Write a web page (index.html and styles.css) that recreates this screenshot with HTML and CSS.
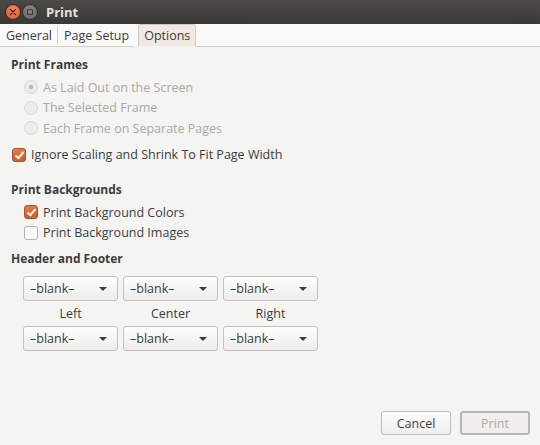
FILE: index.html
```html
<!DOCTYPE html>
<html lang="en">
<head>
    <meta charset="UTF-8">
    <title>Print</title>
    <link rel="stylesheet" href="styles.css">
</head>
<body>
    <div class="window">
        <header class="titlebar">
            <span class="wbtn close">
                <svg width="8" height="8" viewBox="0 0 8 8"><path d="M1.5 1.5l5 5M6.5 1.5l-5 5" stroke="#5a1a0a" stroke-width="1.4" stroke-linecap="round"/></svg>
            </span>
            <span class="wbtn minimize">
                <svg width="8" height="8" viewBox="0 0 8 8"><rect x="1.5" y="1.5" width="5" height="5" rx="1" fill="none" stroke="#3a3a38" stroke-width="1.2"/></svg>
            </span>
            <span class="title">Print</span>
        </header>

        <nav class="tabs">
            <span class="tab">General</span>
            <span class="tab-sep"></span>
            <span class="tab">Page Setup</span>
            <span class="tab active">Options</span>
            <span class="tab-rest"></span>
        </nav>

        <main class="panel">
            <h2 class="heading">Print Frames</h2>
            <div class="options">
                <label class="option disabled"><span class="radio checked"></span>As Laid Out on the Screen</label>
                <label class="option disabled"><span class="radio"></span>The Selected Frame</label>
                <label class="option disabled"><span class="radio"></span>Each Frame on Separate Pages</label>
            </div>
            <label class="option standalone"><span class="check checked"></span>Ignore Scaling and Shrink To Fit Page Width</label>

            <h2 class="heading">Print Backgrounds</h2>
            <div class="options">
                <label class="option"><span class="check checked"></span>Print Background Colors</label>
                <label class="option"><span class="check"></span>Print Background Images</label>
            </div>

            <h2 class="heading">Header and Footer</h2>
            <div class="hf-grid">
                <div class="combo">–blank–<span class="arrow"></span></div>
                <div class="combo">–blank–<span class="arrow"></span></div>
                <div class="combo">–blank–<span class="arrow"></span></div>
                <div class="hf-label">Left</div>
                <div class="hf-label">Center</div>
                <div class="hf-label">Right</div>
                <div class="combo">–blank–<span class="arrow"></span></div>
                <div class="combo">–blank–<span class="arrow"></span></div>
                <div class="combo">–blank–<span class="arrow"></span></div>
            </div>
        </main>

        <footer class="actions">
            <button class="btn" type="button">Cancel</button>
            <button class="btn default" type="button" disabled>Print</button>
        </footer>
    </div>
</body>
</html>
```

FILE: styles.css
```css
/* Print dialog */
body {
    margin: 0;
    font-family: "Open Sans", "DejaVu Sans", sans-serif;
    font-size: 12.5px;
    color: #3c3c3c;
    background: #f2f1f0;
}

.window {
    width: 540px;
    height: 445px;
    display: flex;
    flex-direction: column;
    background: #f4f4f3;
    overflow: hidden;
}

/* Title bar */
.titlebar {
    height: 24px;
    flex: none;
    display: flex;
    align-items: center;
    padding-left: 6px;
    background: linear-gradient(to bottom, #4b4a46, #3a3935);
    color: #dfdbd2;
}

.wbtn {
    width: 14px;
    height: 14px;
    border-radius: 50%;
    display: flex;
    align-items: center;
    justify-content: center;
    margin-right: 3px;
}

.wbtn.close {
    background: radial-gradient(circle at 50% 35%, #f28a5d, #d8542a);
    box-shadow: 0 0 0 1px #2f2e2b;
}

.wbtn.minimize {
    background: radial-gradient(circle at 50% 35%, #8d8b85, #62615c);
    box-shadow: 0 0 0 1px #2f2e2b;
}

.title {
    margin-left: 6px;
    font-weight: bold;
    font-size: 13px;
    color: #e6e2da;
}

/* Tabs */
.tabs {
    height: 23px;
    flex: none;
    display: flex;
    align-items: flex-end;
    background: #fafafa;
}

.tab {
    height: 22px;
    display: flex;
    align-items: center;
    padding: 0 5px 0 6px;
    border-bottom: 1px solid #d0cfcc;
    color: #3c3c3c;
}

.tab-sep {
    width: 1px;
    height: 22px;
    background: linear-gradient(to bottom, transparent, #d0cfcc 20%, #d0cfcc 80%, transparent);
    border-bottom: 1px solid #d0cfcc;
}

.tab.active {
    margin-left: 4px;
    padding: 0 5px;
    height: 21px;
    border: 1px solid #cfc8c2;
    border-bottom-color: #f4f4f3;
    border-radius: 3px 3px 0 0;
    background: #f1e9e4;
}

.tab-rest {
    flex: 1;
    height: 22px;
    border-bottom: 1px solid #d0cfcc;
}

/* Options panel */
.panel {
    flex: 1;
    padding: 9px 11px 0;
}

.heading {
    margin: 0;
    font-size: 12px;
    font-weight: bold;
    line-height: 18px;
}

.options {
    padding: 3px 0 0 13px;
}

.option {
    display: flex;
    align-items: center;
    height: 20.5px;
    gap: 5px;
}

.option.disabled {
    color: #a9a9a7;
}

.option.standalone {
    margin: 6px 0 16px 1px;
    gap: 5px;
}

.radio {
    width: 12px;
    height: 12px;
    border-radius: 50%;
    border: 1px solid #d8d8d6;
    background: #ebebea;
    display: flex;
    align-items: center;
    justify-content: center;
}

.radio.checked::after {
    content: "";
    width: 4px;
    height: 4px;
    border-radius: 50%;
    background: #b3b3b1;
}

.check {
    width: 12px;
    height: 12px;
    border-radius: 3px;
    border: 1px solid #b5b3ae;
    background: #fbfbfa;
    position: relative;
}

.check.checked {
    border-color: #a7552f;
    background: linear-gradient(to bottom, #e27c4c, #c55e31);
}

.check.checked::after {
    content: "";
    position: absolute;
    left: 4px;
    top: 1px;
    width: 3px;
    height: 7px;
    border: solid #fdeee6;
    border-width: 0 2px 2px 0;
    transform: rotate(40deg);
}

.options + .heading {
    margin-top: 7px;
}

/* Header and footer combos */
.hf-grid {
    display: grid;
    grid-template-columns: repeat(3, 95px);
    column-gap: 5px;
    padding: 8px 0 0 12px;
}

.combo {
    box-sizing: border-box;
    height: 25px;
    display: flex;
    align-items: center;
    justify-content: space-between;
    padding: 0 10px 0 6px;
    border: 1px solid #c3c1bd;
    border-radius: 3px;
    background: linear-gradient(to bottom, #fdfdfd, #eeedec);
}

.arrow {
    width: 0;
    height: 0;
    border-left: 4px solid transparent;
    border-right: 4px solid transparent;
    border-top: 4px solid #3c3c3c;
}

.hf-label {
    text-align: center;
    line-height: 25px;
}

/* Dialog buttons */
.actions {
    flex: none;
    display: flex;
    justify-content: flex-end;
    gap: 9px;
    padding: 0 10px 10px 0;
}

.btn {
    width: 70px;
    height: 24px;
    font: inherit;
    color: #3c3c3c;
    border: 1px solid #bdbbb7;
    border-radius: 3px;
    background: linear-gradient(to bottom, #fdfdfd, #efeeed);
}

.btn.default {
    border: 2px solid #b8b6b2;
    color: #a9a9a7;
    background: #f0efee;
}
```
